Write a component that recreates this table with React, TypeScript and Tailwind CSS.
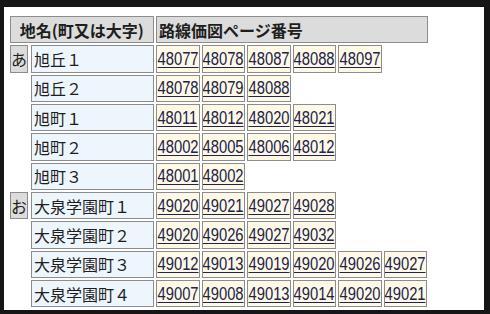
type Row = { kana?: string; name: string; pages: string[] }

const rows: Row[] = [
  { kana: 'あ', name: '旭丘１', pages: ['48077', '48078', '48087', '48088', '48097'] },
  { name: '旭丘２', pages: ['48078', '48079', '48088'] },
  { name: '旭町１', pages: ['48011', '48012', '48020', '48021'] },
  { name: '旭町２', pages: ['48002', '48005', '48006', '48012'] },
  { name: '旭町３', pages: ['48001', '48002'] },
  { kana: 'お', name: '大泉学園町１', pages: ['49020', '49021', '49027', '49028'] },
  { name: '大泉学園町２', pages: ['49020', '49026', '49027', '49032'] },
  { name: '大泉学園町３', pages: ['49012', '49013', '49019', '49020', '49026', '49027'] },
  { name: '大泉学園町４', pages: ['49007', '49008', '49013', '49014', '49020', '49021'] },
]

const cell = 'border border-[#8c8c8c] h-[27.3px] flex items-center shrink-0'

export default function App() {
  return (
    <div
      className="w-[490px] h-[314px] bg-[#161616] pt-[7px] pl-[4px] pr-[6px] pb-[4px] flex"
      style={{ fontFamily: '"Noto Sans CJK JP", sans-serif' }}
    >
      <div className="flex-1 bg-white overflow-hidden pt-[9px] pl-[6px]">
        <div className="flex flex-col gap-[2.05px] text-[16px] leading-none text-[#1e1e1e]">
          {/* header */}
          <div className="flex gap-[2.5px]">
            <div className={`${cell} w-[143.5px] justify-center bg-[#dcdcdc] font-bold`}>地名(町又は大字)</div>
            <div className={`${cell} w-[272px] pl-[2px] bg-[#dcdcdc] font-bold`}>路線価図ページ番号</div>
          </div>
          {rows.map((r) => (
            <div key={r.name} className="flex">
              <div className="w-[21px] shrink-0 pr-[3px]">
                {r.kana && (
                  <div className={`${cell} w-[18px] justify-center bg-[#dcdcdc]`}>{r.kana}</div>
                )}
              </div>
              <div className={`${cell} w-[122.5px] pl-[2px] bg-[#eef6fd]`}>{r.name}</div>
              <div className="flex gap-[2px] pl-[2.5px]">
                {r.pages.map((p, i) => (
                  <a
                    key={i}
                    href="#"
                    className={`${cell} w-[43.5px] justify-center overflow-hidden bg-[#fdf9e6] text-[#22224a]`}
                  >
                    <span
                      className="inline-block scale-x-[0.82] text-[18px] underline underline-offset-[2px]"
                      style={{ fontFamily: '"Liberation Sans", sans-serif' }}
                    >
                      {p}
                    </span>
                  </a>
                ))}
              </div>
            </div>
          ))}
        </div>
      </div>
    </div>
  )
}
